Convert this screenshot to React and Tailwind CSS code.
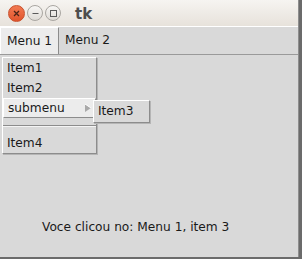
import React from "react";

const font = { fontFamily: '"DejaVu Sans", "Liberation Sans", sans-serif' };

function MenuRow({ label, active, arrow }) {
  return (
    <div
      className={`relative flex items-center h-[20px] pl-[4px] text-[12.2px] text-[#1a1a1a] ${
        active ? "bg-[#ececec] border-t border-l border-t-white border-l-white border-b border-r border-b-[#8c8c8c] border-r-[#8c8c8c] pl-[3px]" : ""
      }`}
    >
      {label}
      {arrow && (
        <svg className="absolute right-[3px] top-[5px]" width="7" height="8" viewBox="0 0 7 8">
          <path d="M0 0 L6 4 L0 8 Z" fill="#a9a9a9" />
          <path d="M0 0 L6 4" stroke="#ffffff" strokeWidth="1" />
        </svg>
      )}
    </div>
  );
}

export default function App() {
  return (
    <div className="w-[302px] h-[259px] bg-[#6b6b6b] overflow-hidden" style={font}>
      <div className="relative w-[299px] h-[257px] bg-[#d9d9d9] border-r border-r-[#8e8e8e] flex flex-col">
        {/* title bar */}
        <div className="h-[27px] flex items-center bg-gradient-to-b from-[#f6f4f1] to-[#e7e2db] border-b border-b-white shrink-0">
          <div className="ml-[8px] w-[17px] h-[17px] rounded-full bg-gradient-to-b from-[#f27a52] to-[#e0532b] border border-[#c9502c] flex items-center justify-center">
            <svg width="7" height="7" viewBox="0 0 7 7">
              <path d="M1 1 L6 6 M6 1 L1 6" stroke="#4a2418" strokeWidth="1.3" />
            </svg>
          </div>
          <div className="ml-[2px] w-[16px] h-[16px] rounded-full bg-gradient-to-b from-[#f8f7f5] to-[#dedbd6] border border-[#a9a6a1] flex items-center justify-center">
            <svg width="7" height="7" viewBox="0 0 7 7">
              <path d="M0.5 3.5 H6.5" stroke="#5a5a5a" strokeWidth="1" />
            </svg>
          </div>
          <div className="ml-[2px] w-[16px] h-[16px] rounded-full bg-gradient-to-b from-[#f8f7f5] to-[#dedbd6] border border-[#a9a6a1] flex items-center justify-center">
            <svg width="7" height="7" viewBox="0 0 7 7">
              <rect x="0.5" y="0.5" width="6" height="6" fill="none" stroke="#5a5a5a" strokeWidth="1" />
            </svg>
          </div>
          <span className="ml-[14px] mt-[2px] text-[15px] font-bold text-[#4e4e4e] leading-none">tk</span>
        </div>

        {/* menu bar */}
        <div className="h-[28px] flex items-stretch border-b border-b-[#9a9a9a] shrink-0 text-[12.2px] text-[#1a1a1a]">
          <div className="w-[59px] bg-[#ececec] border-t border-l border-t-white border-l-white border-r border-r-[#8c8c8c] flex items-center pl-[6px]">
            Menu 1
          </div>
          <div className="flex items-center pl-[6px]">Menu 2</div>
        </div>

        {/* body */}
        <div className="flex-1 flex flex-col justify-end pb-[21px]">
          <div className="pl-[42px] text-[12.2px] text-[#1a1a1a]">Voce clicou no: Menu 1, item 3</div>
        </div>

        {/* dropdown menu */}
        <div className="absolute left-[2px] top-[57px] w-[95px] bg-[#d9d9d9] border border-t-white border-l-white border-r-[#8c8c8c] border-b-[#8c8c8c] shadow-[1px_1px_0_#b5b5b5]">
          <MenuRow label="Item1" />
          <MenuRow label="Item2" />
          <MenuRow label="submenu" active arrow />
          <div className="h-[15px] flex items-center">
            <div className="w-full">
              <div className="h-px bg-[#8c8c8c]" />
              <div className="h-px bg-[#f4f4f4]" />
            </div>
          </div>
          <MenuRow label="Item4" />
        </div>

        {/* cascade */}
        <div className="absolute left-[93px] top-[100px] w-[57px] h-[23px] bg-[#d9d9d9] border border-t-white border-l-white border-r-[#8c8c8c] border-b-[#8c8c8c] shadow-[1px_1px_0_#b5b5b5] flex items-center pl-[4px] text-[12.2px] text-[#1a1a1a]">
          Item3
        </div>
      </div>
    </div>
  );
}
